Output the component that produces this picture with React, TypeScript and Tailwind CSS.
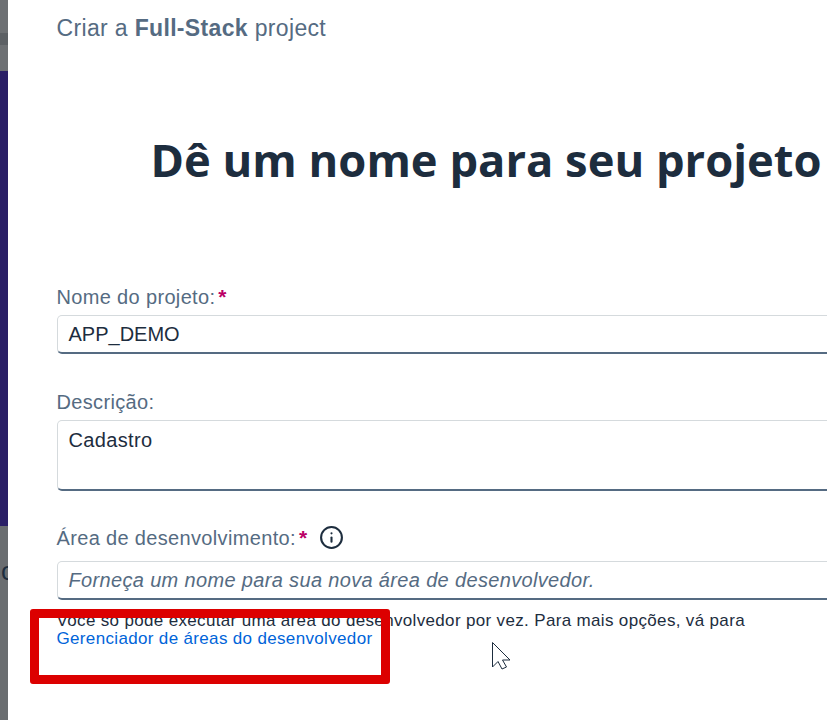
import { Info } from 'lucide-react';

const inputBox = '-mr-1 rounded-l-[5px] border border-b-2 border-[#d5dadd] border-b-[#556b82] pl-[11px] text-[20px]';

const Label = ({ text, required }: { text: string; required?: boolean }) => (
  <div className="flex h-6 items-center text-[20px] text-[#556b82]">
    {text}
    {required && <span className="ml-[3px] text-[21px] font-bold text-[#bb0066]">*</span>}
  </div>
);

export default function App() {
  return (
    <div className="flex h-[720px] w-[827px] overflow-hidden bg-white font-['Liberation_Sans',Arial,sans-serif] tracking-[0.34px]">
      {/* pedaço da tela de trás */}
      <div className="flex w-2 shrink-0 flex-col overflow-hidden">
        <div className="h-[33px] bg-[#6d7073]" />
        <div className="h-3 bg-[#5c6064]" />
        <div className="h-[26px] bg-[#6d7073]" />
        <div className="h-[455px] bg-[#2a1f66]" />
        <div className="flex-1 bg-[#6a6d70] pt-[31px] text-[26px] leading-7 text-[#1d2d3e]">
          <span className="ml-[1px] block">c</span>
        </div>
      </div>

      <div className="relative min-w-0 flex-1 pl-[48.5px]">
        <div className="pt-[13px] text-[23px] leading-[30px] text-[#556b82]">
          Criar a <b>Full-Stack</b> project
        </div>

        <h1 className="mt-[87px] ml-[94px] font-['Open_Sans',sans-serif] text-[45.3px] leading-[60px] font-bold tracking-normal whitespace-nowrap text-[#1d2d3e]">
          Dê um nome para seu projeto
        </h1>

        <div className="mt-[95px]">
          <Label text="Nome do projeto:" required />
          <div className={`${inputBox} mt-[6px] flex h-[39px] items-center tracking-normal text-[#1d2d3e]`}>APP_DEMO</div>
        </div>

        <div className="mt-[36px]">
          <Label text="Descrição:" />
          <div className={`${inputBox} mt-[6px] h-[71px] pt-[7px] leading-6 text-[#1d2d3e]`}>Cadastro</div>
        </div>

        <div className="mt-[34px]">
          <div className="flex items-center">
            <Label text="Área de desenvolvimento:" required />
            <Info className="ml-[12px] size-[25px] text-[#1d2d3e]" strokeWidth={2} />
          </div>
          <div className={`${inputBox} mt-[11px] flex h-[39px] items-center text-[#556b82] italic`}>
            Forneça um nome para sua nova área de desenvolvedor.
          </div>
        </div>

        <div className="mt-[12px] text-[17px] leading-[18px] text-[#1d2d3e]">
          Você só pode executar uma área do desenvolvedor por vez. Para mais opções, vá para
          <br />
          <span className="text-[#0064d9]">Gerenciador de áreas do desenvolvedor</span>
        </div>

        {/* marcação vermelha por cima do print */}
        <div className="absolute top-[609px] left-[22px] h-[75px] w-[360px] rounded-[3px] border-[9px] border-[#dc0000]" />

        <svg className="absolute top-[642px] left-[484px]" width="19" height="28" viewBox="0 0 19 28">
          <path d="M0.5 0.5V25L6 19.5L10 27L14.5 25L10.5 18H18Z" fill="#fff" stroke="#1d2d3e" strokeWidth="1" />
        </svg>
      </div>
    </div>
  );
}
